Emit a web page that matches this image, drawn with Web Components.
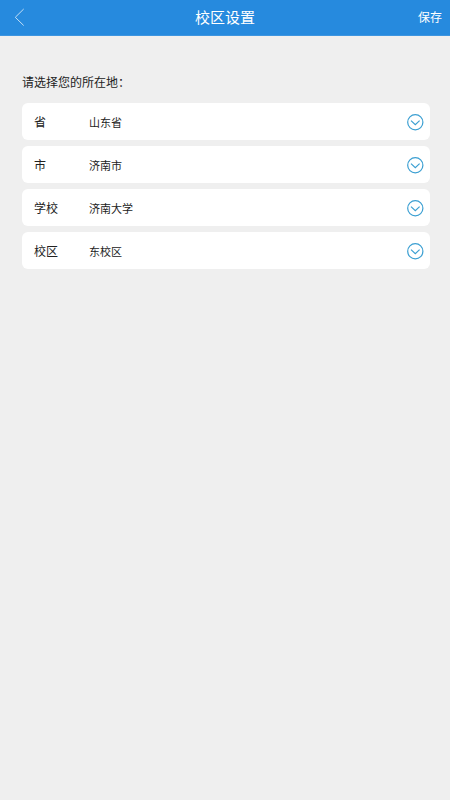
<!DOCTYPE html>
<html lang="zh-CN">
<head>
<meta charset="utf-8">
<meta name="viewport" content="width=device-width, initial-scale=1">
<title>校区设置</title>
<style>
  html { background: #efefef; }
  body {
    margin: 0;
    color: #222;
    font-family: "Noto Sans CJK SC", sans-serif;
    font-size: 12px;
    line-height: 18px;
  }
</style>
</head>
<body>
<campus-settings></campus-settings>

<template id="app-bar">
  <style>
    :host {
      display: grid;
      grid-template-columns: 1fr auto 1fr;
      align-items: center;
      height: 36px;
      box-sizing: border-box;
      padding: 0 8px 1px;
      background: #268ade;
      border-bottom: 1px solid #3d95e0;
      color: #fff;
    }
    button {
      margin: 0;
      padding: 0;
      border: 0;
      background: none;
      color: inherit;
      font: inherit;
      cursor: pointer;
    }
    .back { justify-self: start; display: flex; padding: 0 4px; }
    .save { justify-self: end; }
    h1 { margin: 0; font-size: 15px; line-height: 24px; font-weight: 400; }
    svg { display: block; fill: none; stroke: #c4dff6; stroke-width: 1; }
  </style>
  <button class="back" type="button" aria-label="返回">
    <svg width="16" height="20" viewBox="0 0 16 20"><path d="M11.7 2 3.3 10.3l8.4 8.2"/></svg>
  </button>
  <h1><slot></slot></h1>
  <button class="save" type="button"><slot name="action"></slot></button>
</template>

<template id="select-row">
  <style>
    :host {
      display: grid;
      grid-template-columns: 55px 1fr 24px;
      align-items: center;
      height: 37px;
      padding: 0 6px 0 12px;
      background: #fff;
      border-radius: 6px;
    }
    label { grid-area: 1 / 1; }
    select {
      grid-area: 1 / 2 / 2 / 4;
      appearance: none;
      width: 100%;
      height: 36px;
      margin: 0;
      padding: 0;
      border: 0;
      outline-offset: -2px;
      background: none;
      color: #222;
      font-family: inherit;
      font-size: 11px;
      line-height: 18px;
      cursor: pointer;
    }
    svg {
      grid-area: 1 / 3;
      justify-self: end;
      display: block;
      fill: none;
      stroke: #3b9fd2;
      stroke-width: 1.2;
      pointer-events: none;
    }
  </style>
  <label for="choice"></label>
  <select id="choice"><option></option></select>
  <svg width="18" height="18" viewBox="0 0 18 18" aria-hidden="true">
    <circle cx="9.3" cy="9.3" r="7.6"/><path d="m5 7.6 4.3 4.1 4.3-4.1"/>
  </svg>
</template>

<template id="campus-settings">
  <style>
    :host { display: block; }
    main { padding: 37px 20px 20px 22px; }
    p { margin: 0 0 12px; }
    form { display: grid; gap: 6px; }
  </style>
  <app-bar>校区设置<span slot="action">保存</span></app-bar>
  <main>
    <p>请选择您的所在地：</p>
    <form>
      <select-row label="省" value="山东省"></select-row>
      <select-row label="市" value="济南市"></select-row>
      <select-row label="学校" value="济南大学"></select-row>
      <select-row label="校区" value="东校区"></select-row>
    </form>
  </main>
</template>

<script>
  class TemplateElement extends HTMLElement {
    constructor() {
      super();
      const template = document.getElementById(this.localName);
      this.attachShadow({ mode: "open" }).append(template.content.cloneNode(true));
    }
  }

  class AppBar extends TemplateElement {}

  class SelectRow extends TemplateElement {
    connectedCallback() {
      this.shadowRoot.querySelector("label").textContent = this.getAttribute("label");
      this.shadowRoot.querySelector("option").textContent = this.getAttribute("value");
    }
  }

  class CampusSettings extends TemplateElement {}

  customElements.define("app-bar", AppBar);
  customElements.define("select-row", SelectRow);
  customElements.define("campus-settings", CampusSettings);
</script>
</body>
</html>
